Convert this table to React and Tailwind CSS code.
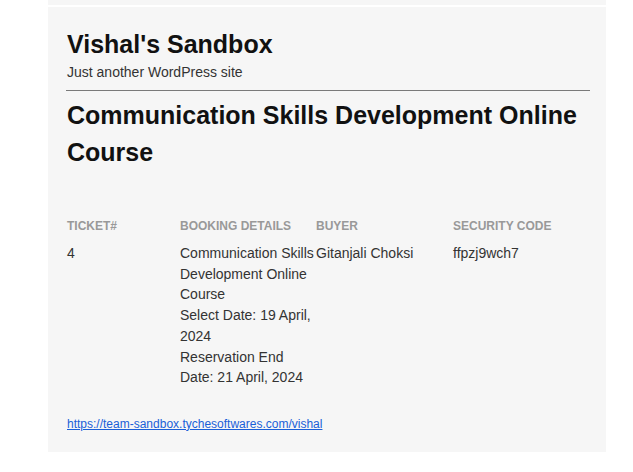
import React from 'react';

const columns = [
  { label: 'Ticket#', width: 'w-[113px]' },
  { label: 'Booking Details', width: 'w-[136px]' },
  { label: 'Buyer', width: 'w-[137px]' },
  { label: 'Security Code', width: 'flex-1' },
];

const App = () => (
  <div className="min-h-screen bg-white font-['Liberation_Sans',Arial,sans-serif]">
    <div className="ml-[48px] w-[558px] h-[5px] bg-[#f6f6f6]" />
    <div className="ml-[48px] mt-[2px] w-[558px] bg-[#f6f6f6] pl-[19px] pr-[16px] pt-[22px] pb-[20px]">
      <h1 className="text-[25px] leading-[30px] font-bold text-[#111]">Vishal's Sandbox</h1>
      <p className="mt-[5px] text-[14px] leading-[17px] text-[#333]">Just another WordPress site</p>
      <div className="mt-[9px] -ml-[1px] border-t border-[#7a7a7a]" />
      <h2 className="mt-[6px] text-[25px] leading-[37px] font-bold text-[#111]">
        Communication Skills Development Online Course
      </h2>

      <div className="mt-[48px] flex text-[12px] leading-[15px] font-bold uppercase text-[#999]">
        {columns.map((c) => (
          <div key={c.label} className={c.width}>{c.label}</div>
        ))}
      </div>
      <div className="mt-[9px] flex text-[14px] leading-[20.7px] text-[#333]">
        <div className="w-[113px]">4</div>
        <div className="w-[136px]">
          Communication Skills Development Online Course
          <br />
          Select Date: 19 April, 2024
          <br />
          Reservation End Date: 21 April, 2024
        </div>
        <div className="w-[137px]">Gitanjali Choksi</div>
        <div className="flex-1">ffpzj9wch7</div>
      </div>

      <a
        href="#"
        className="mt-[29px] block text-[12px] leading-[15px] text-[#1a5fd8] underline"
      >
        https://team-sandbox.tychesoftwares.com/vishal
      </a>
    </div>
  </div>
);

export default App;
